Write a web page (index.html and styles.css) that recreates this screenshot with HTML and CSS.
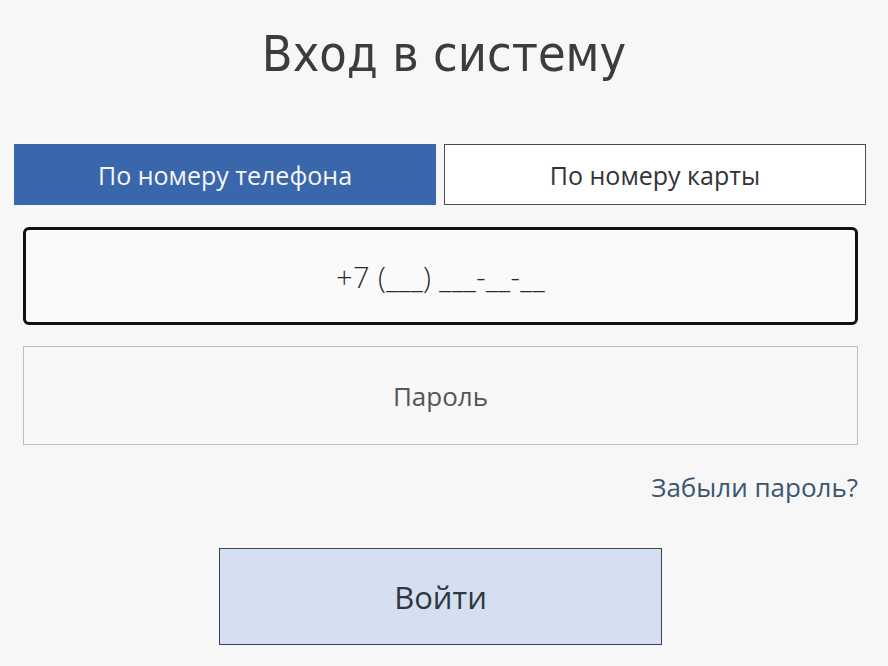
FILE: index.html
```html
<!DOCTYPE html>
<html lang="ru">
<head>
<meta charset="utf-8">
<title>Вход в систему</title>
<link rel="stylesheet" href="styles.css">
</head>
<body>
<main class="login">
  <h1 class="title">Вход в систему</h1>
  <div class="tabs">
    <button class="tab tab-active">По номеру телефона</button>
    <button class="tab">По номеру карты</button>
  </div>
  <div class="fields">
    <div class="field field-phone">+7 (___) ___-__-__</div>
    <div class="field field-pass">Пароль</div>
    <div class="forgot-row"><a class="forgot" href="#">Забыли пароль?</a></div>
    <div class="submit-row"><button class="submit">Войти</button></div>
  </div>
</main>
</body>
</html>
```
FILE: styles.css
```css
html, body {
  margin: 0;
  padding: 0;
  background: #f7f7f7;
}
.login {
  width: 888px;
  height: 666px;
  overflow: hidden;
  font-family: "Open Sans", "DejaVu Sans", sans-serif;
}
.title {
  margin: 0;
  height: 144px;
  box-sizing: border-box;
  padding-top: 22px;
  text-align: center;
  font-family: "DejaVu Sans Condensed", "Liberation Sans Narrow", "Open Sans", sans-serif;
  font-weight: 400;
  font-size: 50px;
  line-height: 64px;
  color: #3c3c3c;
}
.tabs {
  display: flex;
  gap: 8px;
  padding: 0 22px 0 14px;
}
.tab {
  flex: 1;
  height: 61px;
  box-sizing: border-box;
  border: 1px solid #4d4d4d;
  background: #fff;
  font-family: inherit;
  font-size: 25px;
  color: #333;
  padding: 0;
}
.tab-active {
  background: #3a66ab;
  border-color: #3a66ab;
  color: #f4f7fb;
}
.fields {
  padding: 22px 30px 0 23px;
  display: flex;
  flex-direction: column;
}
.field {
  box-sizing: border-box;
  display: flex;
  align-items: center;
  justify-content: center;
  font-size: 26px;
  color: #555;
}
.field-phone {
  height: 98px;
  border: 3px solid #111;
  border-radius: 6px;
  background: #fafafa;
  color: #2a2a2a;
  font-weight: 300;
  font-size: 29px;
  letter-spacing: 0.4px;
  padding-top: 1px;
}
.field-pass {
  margin-top: 21px;
  height: 99px;
  border: 1px solid #bdbdbd;
  background: #f8f8f8;
}
.forgot-row {
  display: flex;
  justify-content: flex-end;
  padding-top: 25px;
  height: 77px;
  box-sizing: border-box;
}
.forgot {
  font-size: 26px;
  color: #3a5672;
  text-decoration: none;
  line-height: 34px;
}
.submit-row {
  display: flex;
  justify-content: center;
  padding-top: 26px;
}
.submit {
  width: 443px;
  height: 97px;
  box-sizing: border-box;
  border: 1px solid #3b4552;
  background: #d4e0f2;
  font-family: inherit;
  font-size: 31px;
  color: #2f3640;
  padding: 0;
}
```
